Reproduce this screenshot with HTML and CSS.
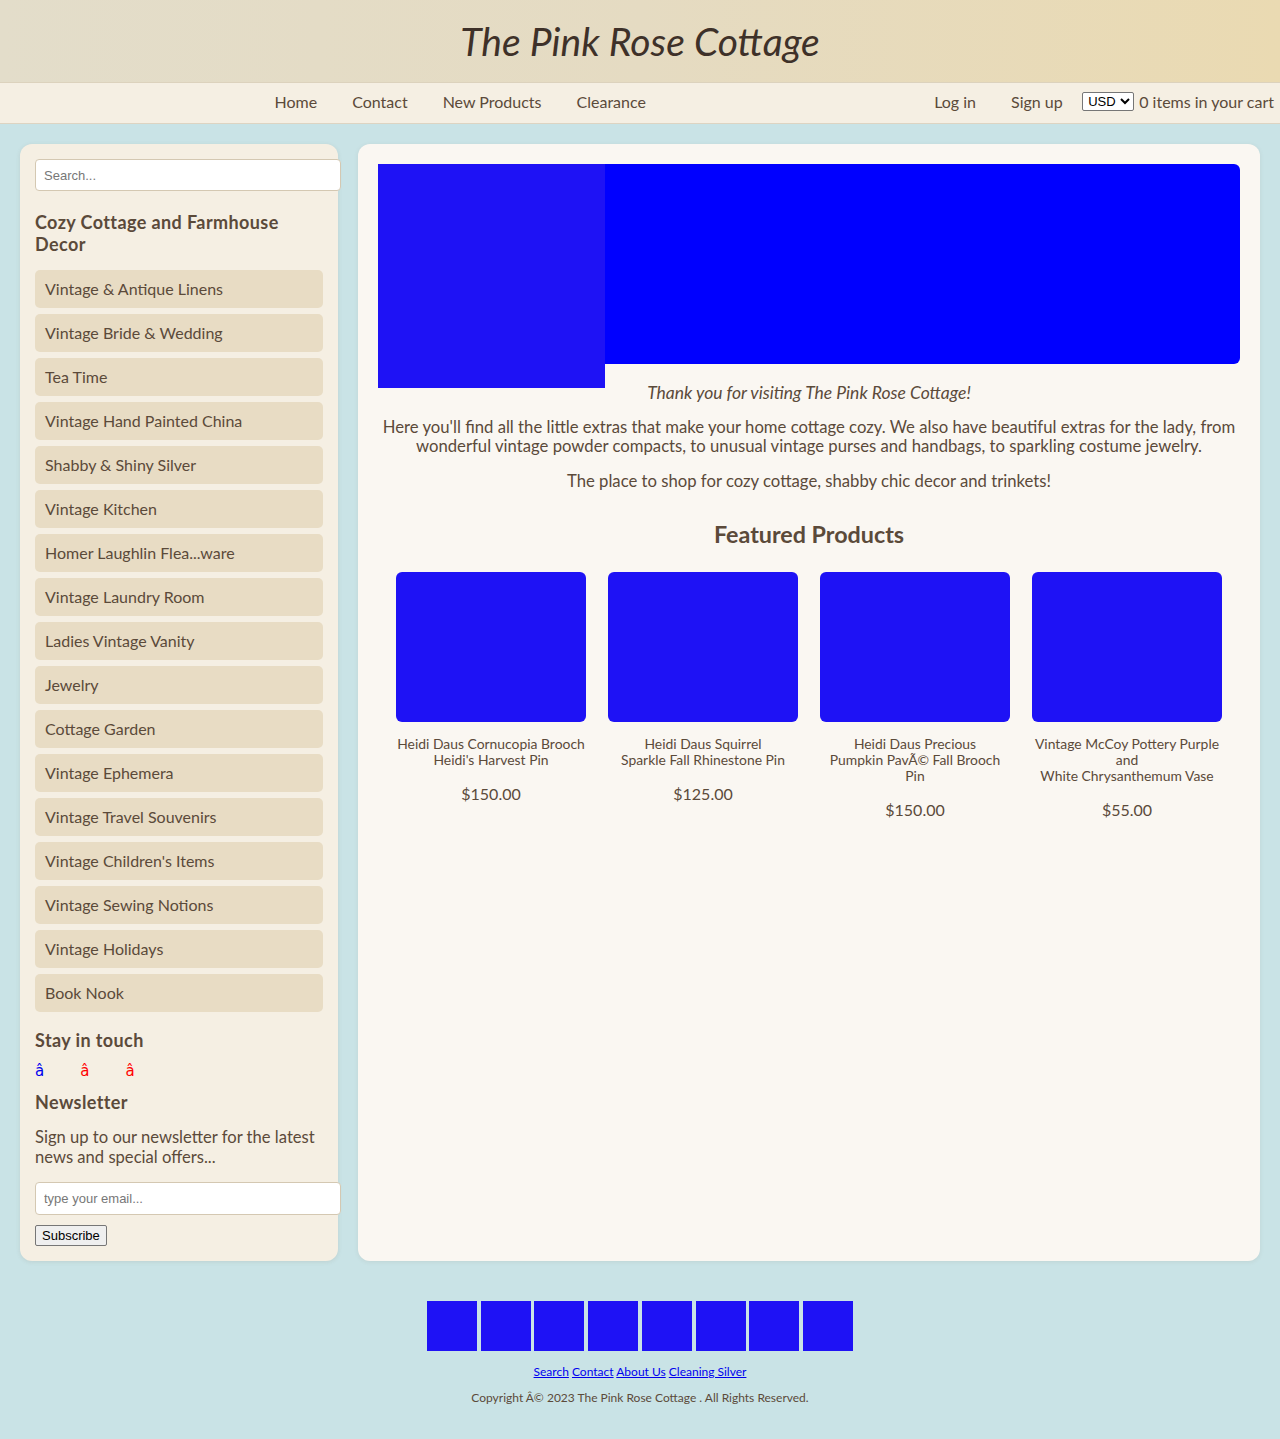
FILE: index.html
```html
<!DOCTYPE html>
<html lang="en">
<head>
<meta charset="utf-8">
<title>The Pink Rose Cottage</title>
<link rel="stylesheet" href="styles.css">
</head>
<body>
<header class="site-header">
  <h1 class="site-title">The Pink Rose Cottage</h1>
</header>
<nav class="site-nav">
  <div class="nav-main">
    <a href="#">Home</a>
    <a href="#">Contact</a>
    <a href="#">New Products</a>
    <a href="#">Clearance</a>
  </div>
  <div class="nav-user">
    <a href="#">Log in</a>
    <a href="#">Sign up</a>
    <select class="currency"><option>USD</option></select>
    <span class="cart">0 items in your cart</span>
  </div>
</nav>
<div class="layout">
  <aside class="sidebar">
    <input class="field" type="text" placeholder="Search...">
    <h3 class="side-heading first">Cozy Cottage and Farmhouse Decor</h3>
    <ul class="cats">
      <li><a href="#">Vintage &amp; Antique Linens</a></li>
      <li><a href="#">Vintage Bride &amp; Wedding</a></li>
      <li><a href="#">Tea Time</a></li>
      <li><a href="#">Vintage Hand Painted China</a></li>
      <li><a href="#">Shabby &amp; Shiny Silver</a></li>
      <li><a href="#">Vintage Kitchen</a></li>
      <li><a href="#">Homer Laughlin Flea...ware</a></li>
      <li><a href="#">Vintage Laundry Room</a></li>
      <li><a href="#">Ladies Vintage Vanity</a></li>
      <li><a href="#">Jewelry</a></li>
      <li><a href="#">Cottage Garden</a></li>
      <li><a href="#">Vintage Ephemera</a></li>
      <li><a href="#">Vintage Travel Souvenirs</a></li>
      <li><a href="#">Vintage Children's Items</a></li>
      <li><a href="#">Vintage Sewing Notions</a></li>
      <li><a href="#">Vintage Holidays</a></li>
      <li><a href="#">Book Nook</a></li>
    </ul>
    <h3 class="side-heading touch">Stay in touch</h3>
    <div class="social">
      <a href="#" class="soc blue">â</a>
      <a href="#" class="soc red">â</a>
      <a href="#" class="soc red">â</a>
    </div>
    <h3 class="side-heading news">Newsletter</h3>
    <p class="news-text">Sign up to our newsletter for the latest news and special offers...</p>
    <input class="field email" type="text" placeholder="type your email...">
    <button class="subscribe" type="button">Subscribe</button>
  </aside>
  <main class="content">
    <div class="hero">
      <div class="hero-img"></div>
    </div>
    <p class="welcome"><em>Thank you for visiting The Pink Rose Cottage!</em></p>
    <p class="intro">Here you'll find all the little extras that make your home cottage cozy. We also have beautiful extras for the lady, from wonderful vintage powder compacts, to unusual vintage purses and handbags, to sparkling costume jewelry.</p>
    <p class="intro">The place to shop for cozy cottage, shabby chic decor and trinkets!</p>
    <h2 class="featured-title">Featured Products</h2>
    <div class="products">
      <div class="product">
        <div class="product-img"></div>
        <div class="product-name">Heidi Daus Cornucopia Brooch<br>Heidi's Harvest Pin</div>
        <div class="product-price">$150.00</div>
      </div>
      <div class="product">
        <div class="product-img"></div>
        <div class="product-name">Heidi Daus Squirrel<br>Sparkle Fall Rhinestone Pin</div>
        <div class="product-price">$125.00</div>
      </div>
      <div class="product">
        <div class="product-img"></div>
        <div class="product-name">Heidi Daus Precious<br>Pumpkin PavÃ© Fall Brooch<br>Pin</div>
        <div class="product-price">$150.00</div>
      </div>
      <div class="product">
        <div class="product-img"></div>
        <div class="product-name">Vintage McCoy Pottery Purple<br>and<br>White Chrysanthemum Vase</div>
        <div class="product-price">$55.00</div>
      </div>
    </div>
  </main>
</div>
<footer class="site-footer">
  <div class="badges">
    <span class="badge"></span><span class="badge"></span><span class="badge"></span><span class="badge"></span><span class="badge"></span><span class="badge"></span><span class="badge"></span><span class="badge"></span>
  </div>
  <div class="footer-links">
    <a href="#">Search</a> <a href="#">Contact</a> <a href="#">About Us</a> <a href="#">Cleaning Silver</a>
  </div>
  <p class="copyright">Copyright Â© 2023 The Pink Rose Cottage . All Rights Reserved.</p>
</footer>
</body>
</html>
```
FILE: styles.css
```css
html, body {
  margin: 0;
  padding: 0;
}
body {
  background: #c9e3e6;
  color: #5b4a3a;
  font-family: "Trebuchet MS", Lato, "Noto Sans", sans-serif;
  font-size: 16px;
  overflow-x: hidden;
}
a {
  color: inherit;
  text-decoration: none;
}

/* header */
.site-header {
  background: linear-gradient(90deg, #e3ddca 0%, #e5dbc2 50%, #eadab2 100%);
  border-bottom: 1px solid #dcd2bd;
  height: 82px;
}
.site-title {
  margin: 0;
  text-align: center;
  font-size: 39px;
  font-weight: normal;
  font-style: italic;
  line-height: 82px;
  color: #3e3129;
}

/* nav */
.site-nav {
  display: flex;
  align-items: center;
  height: 40px;
  background: #f5efe3;
  border-bottom: 1px solid #ddd4c2;
  overflow: hidden;
  white-space: nowrap;
}
.nav-main, .nav-user {
  padding-bottom: 3px;
}
.nav-main {
  display: flex;
  padding-left: 257px;
}
.nav-main a, .nav-user a {
  padding: 0 17.5px;
  color: #5b4a3a;
}
.nav-user {
  display: flex;
  align-items: center;
  margin-left: auto;
  margin-right: 6px;
}
.currency {
  margin-left: 2px;
  font-family: "Liberation Sans", Arial, sans-serif;
  font-size: 13px;
  height: 19px;
  padding: 0 1px;
  border: 1px solid #767676;
  border-radius: 2px;
  background: #fff;
  color: #000;
}
.cart {
  margin-left: 5px;
}

/* layout */
.layout {
  display: flex;
  gap: 20px;
  padding: 20px;
  align-items: stretch;
}
.sidebar {
  width: 288px;
  flex: 0 0 288px;
  padding: 15px 15px 15px;
  background: #f5efe3;
  border-radius: 12px;
  box-shadow: 0 1px 4px rgba(120, 110, 90, 0.15);
}
.field {
  display: block;
  width: 100%;
  box-sizing: content-box;
  height: 16px;
  padding: 7px 8px;
  border: 1px solid #d4c8b2;
  border-radius: 4px;
  background: #fff;
  font-family: "Liberation Sans", Arial, sans-serif;
  font-size: 13px;
  color: #333;
}
.field::placeholder {
  color: #777;
}
.side-heading {
  margin: 0;
  font-size: 18px;
  line-height: 22px;
  font-weight: bold;
  letter-spacing: 0.4px;
  color: #5b4a3a;
}
.side-heading.first {
  margin-top: 20px;
  max-width: 260px;
}
.cats {
  list-style: none;
  margin: 15px 0 0;
  padding: 0;
  display: flex;
  flex-direction: column;
  gap: 6px;
}
.cats a {
  display: block;
  padding: 10px 10px;
  line-height: 18px;
  background: #e8dcc4;
  border-radius: 5px;
  color: #5b4a3a;
}
.side-heading.touch {
  margin-top: 17px;
}
.social {
  display: flex;
  gap: 36px;
  margin-top: 10px;
  line-height: 20px;
  font-family: "DejaVu Sans", sans-serif;
  font-size: 15px;
}
.soc.blue { color: #0000ee; }
.soc.red { color: #ff0000; }
.side-heading.news {
  margin-top: 10px;
}
.news-text {
  margin: 14px 0 0;
  line-height: 20px;
  font-size: 16.6px;
}
.field.email {
  margin-top: 15px;
  height: 17px;
}
.subscribe {
  display: block;
  margin-top: 10px;
  font-family: "Liberation Sans", Arial, sans-serif;
  font-size: 13px;
  padding: 1px 6px;
  height: 21px;
  border: 1px solid #767676;
  border-radius: 2px;
  background: #efefef;
  color: #000;
}

/* content */
.content {
  flex: 1;
  padding: 20px;
  background: #faf7f2;
  border-radius: 12px;
  box-shadow: 0 1px 4px rgba(120, 110, 90, 0.12);
}
.hero {
  position: relative;
  height: 200px;
  background: #0000ff;
  border-radius: 6px;
}
.hero-img {
  position: absolute;
  top: 0;
  left: 0;
  width: 227px;
  height: 224px;
  background: #1e12f5;
}
.welcome, .intro {
  text-align: center;
  line-height: 19px;
  margin: 16px 0 0;
}
.intro {
  font-size: 16.7px;
}
.welcome {
  margin-top: 19px;
  font-size: 17.5px;
}
.featured-title {
  margin: 30px 0 0;
  text-align: center;
  font-size: 23.3px;
  line-height: 26px;
  font-weight: bold;
  color: #5b4a3a;
}
.products {
  display: grid;
  grid-template-columns: repeat(4, 190px);
  gap: 22px;
  justify-content: center;
  margin-top: 25px;
}
.product {
  text-align: center;
}
.product-img {
  height: 150px;
  background: #1e12f5;
  border-radius: 6px;
}
.product-name {
  margin-top: 14px;
  font-size: 13.9px;
  line-height: 16px;
}
.product-price {
  margin-top: 16px;
  line-height: 20px;
  font-size: 16px;
}

/* footer */
.site-footer {
  padding: 20px 0 24px;
  text-align: center;
}
.badges {
  display: flex;
  justify-content: center;
  gap: 3.75px;
}
.badge {
  width: 50px;
  height: 50px;
  background: #1e12f5;
}
.footer-links {
  margin-top: 14px;
  font-size: 12px;
  line-height: 14px;
}
.footer-links a {
  color: #0000ee;
  text-decoration: underline;
}
.copyright {
  margin: 12px 0 0;
  font-size: 12px;
  line-height: 14px;
  color: #5b4a3a;
}
```
